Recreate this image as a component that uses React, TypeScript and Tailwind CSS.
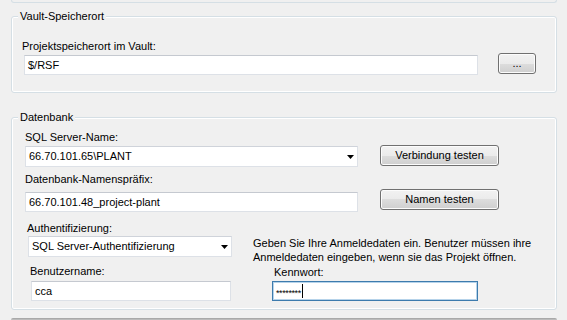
import React from "react";

const font = { fontFamily: '"Liberation Sans", Arial, sans-serif' };

function Caret() {
  return (
    <svg width="7" height="4" viewBox="0 0 7 4" className="shrink-0">
      <path d="M0 0h7L3.5 4z" fill="#000" />
    </svg>
  );
}

function TextBox({ value, className = "" }: { value: string; className?: string }) {
  return (
    <div
      className={`h-[20px] bg-white border border-[#dde1e7] border-t-[#c5c9d0] flex items-center pl-[3px] leading-none ${className}`}
    >
      {value}
    </div>
  );
}

function Combo({ value, className = "" }: { value: string; className?: string }) {
  return (
    <div
      className={`h-[21px] bg-white border border-[#dde1e7] border-t-[#cfd3da] flex items-center pl-[3px] pr-[3px] leading-none ${className}`}
    >
      <span className="flex-1">{value}</span>
      <Caret />
    </div>
  );
}

function WinButton({ label, className = "" }: { label: string; className?: string }) {
  return (
    <button
      className={`h-[21px] rounded-[3px] border border-[#707070] shadow-[inset_0_0_0_1px_#fcfcfc] bg-[linear-gradient(to_bottom,#f2f2f2_0%,#ebebeb_50%,#dddddd_50%,#cfcfcf_100%)] flex items-center justify-center leading-none text-black ${className}`}
    >
      {label}
    </button>
  );
}

function Group({ title, className = "", children }: { title: string; className?: string; children: React.ReactNode }) {
  return (
    <div
      className={`relative w-[546px] ml-[11px] border border-[#d5dfe5] rounded-[3px] shadow-[inset_0_0_0_1px_#ffffff] ${className}`}
    >
      <span className="absolute -top-[8px] left-[6px] px-[2px] bg-[#f0f0f0] leading-[14px]">{title}</span>
      {children}
    </div>
  );
}

export default function App() {
  return (
    <div
      className="w-[567px] h-[320px] bg-[#f0f0f0] overflow-hidden text-[11px] text-black flex flex-col"
      style={font}
    >
      <div className="w-[546px] ml-[11px] h-[3px] border-x border-b border-[#d5dfe5] rounded-b-[3px]" />

      <Group title="Vault-Speicherort" className="mt-[13px] h-[77px]">
        <div className="pt-[22px] pl-[10px] leading-[14px]">Projektspeicherort im Vault:</div>
        <div className="flex items-start mt-[2px] pl-[12px]">
          <TextBox value="$/RSF" className="w-[454px]" />
          <WinButton label="..." className="ml-[20px] -mt-[2px] w-[38px]" />
        </div>
      </Group>

      <Group title="Datenbank" className="mt-[24px] h-[193px]">
        <div className="pt-[12px] pl-[13px]">
          <div className="flex items-start">
            <div className="w-[333px]">
              <div className="leading-[14px]">SQL Server-Name:</div>
              <Combo value="66.70.101.65\PLANT" className="mt-[2px] w-[333px]" />
            </div>
            <WinButton label="Verbindung testen" className="ml-[22px] mt-[15px] w-[119px]" />
          </div>

          <div className="flex items-start mt-[5px]">
            <div className="w-[333px]">
              <div className="leading-[14px]">Datenbank-Namenspräfix:</div>
              <TextBox value="66.70.101.48_project-plant" className="mt-[6px] w-[333px]" />
            </div>
            <WinButton label="Namen testen" className="ml-[22px] mt-[17px] w-[119px]" />
          </div>

          <div className="flex items-start mt-[9px]">
            <div className="w-[218px]">
              <div className="leading-[14px] pl-[2px]">Authentifizierung:</div>
              <Combo value="SQL Server-Authentifizierung" className="mt-[1px] ml-[3px] w-[204px]" />
              <div className="leading-[14px] pl-[5px] mt-[7px]">Benutzername:</div>
              <TextBox value="cca" className="mt-[3px] ml-[6px] w-[200px]" />
            </div>
            <div className="ml-[10px] mt-[15px]">
              <div className="leading-[14px] w-[290px]">
                Geben Sie Ihre Anmeldedaten ein. Benutzer müssen ihre Anmeldedaten eingeben, wenn sie das Projekt öffnen.
              </div>
              <div className="leading-[14px] pl-[21px] mt-[1px]">Kennwort:</div>
              <div className="mt-[2px] ml-[19px] w-[206px] h-[20px] bg-white border border-[#3d7bad] shadow-[inset_0_0_0_1px_#b6d3ea] flex items-center pl-[3px]">
                <span className="text-[9px] tracking-[-0.4px] leading-none pt-[4px]">********</span>
                <span className="w-px h-[14px] bg-black ml-[1px]" />
              </div>
            </div>
          </div>
        </div>
      </Group>

      <div className="w-[546px] ml-[11px] mt-[8px] h-[2px] rounded-t-[2px] bg-[linear-gradient(to_bottom,#a0a0a0,#c4c4c4)]" />
    </div>
  );
}
